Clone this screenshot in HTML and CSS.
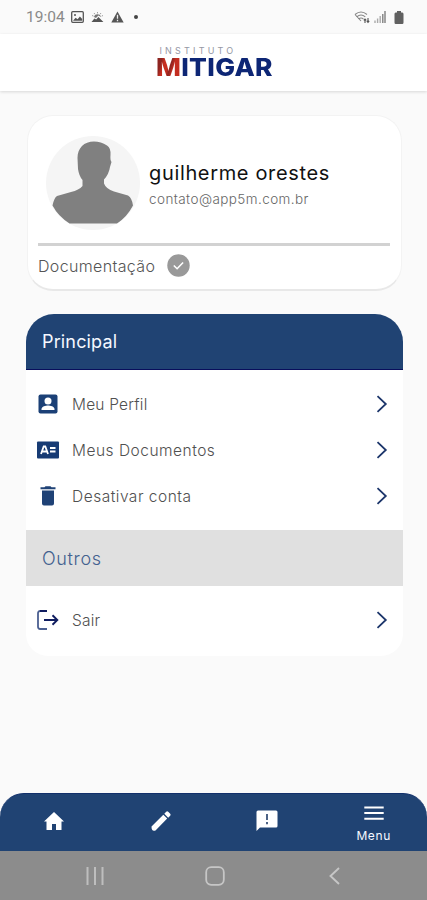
FILE: index.html
```html
<!DOCTYPE html>
<html lang="pt-BR">
<head>
<meta charset="utf-8">
<meta name="viewport" content="width=device-width">
<title>Instituto Mitigar</title>
<link rel="stylesheet" href="styles.css">
</head>
<body>
<div class="app">
  <div class="status">
    <div class="status-left">
      <span class="clock">19:04</span>
      <svg width="13" height="12" viewBox="0 0 13 12"><rect x=".7" y=".7" width="11.6" height="10.6" rx="1" fill="none" stroke="#555" stroke-width="1.3"/><path d="M2 9.8l2.6-3 2 1.4 2.3-2.8L11.2 8v1.8z" fill="#555"/><circle cx="4" cy="3.9" r="1" fill="#555"/></svg>
      <svg width="13" height="12" viewBox="0 0 13 12"><path d="M.5 11L3.4 7.5l1.8 1L7.4 6l5 5z" fill="#555"/><path d="M3 6a3.6 3.6 0 0 1 7 0L7.4 4.4 5 7z" fill="#777"/><path d="M1 4.5l1.5.6M3 2l1 1.3M6.5 1v1.4M10 2L9 3.3M12 4.5l-1.3.6" stroke="#888" stroke-width=".8"/></svg>
      <svg width="13" height="12" viewBox="0 0 13 12"><path d="M6.5.5L12.7 11.5H.3z" fill="#555"/><path d="M6.5 3.8v4M6.5 8.8v1.4" stroke="#eee" stroke-width="1.3"/></svg>
      <i class="dot"></i>
    </div>
    <div class="status-right">
      <svg width="16" height="13" viewBox="0 0 16 13" fill="none" stroke="#888" stroke-width="1.1"><path d="M1 3.500q6-5 12 0M2.700 5.800q4.300-3.700 8.600 0M4.600 8q2.400-2 4.800 0M1 3.500L7 10"/><path d="M11 12V8.200M9.800 9.400L11 8l1.200 1.400M14 7v4M12.800 9.800L14 11.300l1.200-1.500" stroke="#555"/></svg>
      <svg width="12" height="12" viewBox="0 0 12 12"><path d="M1 9.500V12M3.600 7.500V12M6.200 5V12" stroke="#aaa" stroke-width="1.400"/><path d="M8.800 3V12M11 0V12" stroke="#777" stroke-width="1.300"/></svg>
      <svg class="battery" width="10" height="13" viewBox="0 0 10 13"><path d="M3 0h4v1.500h1.300Q9.500 1.500 9.500 3v8.500Q9.500 13 8.300 13H1.700Q.5 13 .5 11.500V3Q.5 1.500 1.700 1.500H3z" fill="#606060"/></svg>
    </div>
  </div>

  <header class="brand">
    <div class="brand-top">INSTITUTO</div>
    <div class="brand-name"><span class="brand-m">M</span>ITIGAR</div>
  </header>

  <main class="content">
    <section class="profile">
      <div class="person">
        <svg class="avatar" width="94" height="94" viewBox="0 0 94 94"><circle cx="47" cy="47" r="47" fill="#f5f5f5"/><path d="M48 5.500C38 5.500 31.500 12 31.500 22L32 33Q33 40 36.500 44V50Q33 54 25 56L11 60Q8 62 6.500 69.500Q12 80 23.500 87.500H71Q81 81 87 69.500Q86 62 82 59.500L68 55.500Q60 53 58 47.500V43.500Q63 38 64 31L65.500 26Q64 24 64.500 19Q65 12 61 9.500Q55 5.500 48 5.500Z" fill="#808080"/></svg>
        <div class="who">
          <div class="name">guilherme orestes</div>
          <div class="mail">contato@app5m.com.br</div>
        </div>
      </div>
      <div class="rule"></div>
      <div class="docs"><span class="docs-label">Documentação</span>
        <svg width="23" height="23" viewBox="0 0 23 23"><circle cx="11.500" cy="11.500" r="11.200" fill="#999"/><path d="M6.800 11.500l3.300 3.200 6-6.200" fill="none" stroke="#fff" stroke-width="1.600"/></svg>
      </div>
    </section>

    <section class="menu">
      <h2 class="head head-main"><span>Principal</span></h2>
      <div class="rows">
        <div class="row">
          <svg class="icon" width="24" height="24" viewBox="0 0 24 24"><rect x="2.500" y="2.500" width="19" height="19" rx="2" fill="#1b4076"/><circle cx="12" cy="9" r="3.500" fill="#fff"/><path d="M5.500 18v-1c0-2.400 4.300-3.500 6.500-3.500s6.500 1.100 6.500 3.500v1z" fill="#fff"/></svg>
          <span class="label l-perfil">Meu Perfil</span>
          <svg class="chev" width="12" height="18" viewBox="0 0 12 18"><path d="M1.500 1.200L9.800 9l-8.300 7.800"/></svg>
        </div>
        <div class="row">
          <svg class="icon" width="24" height="24" viewBox="0 0 24 24"><rect x="1" y="3.500" width="22" height="17" rx="1" fill="#173b74"/><path d="M5 16l2.700-7.500h1.600L12 16M6 13.500h5M14 10h5.500M14 13.500h5.500" fill="none" stroke="#fff" stroke-width="1.800"/></svg>
          <span class="label l-docs">Meus Documentos</span>
          <svg class="chev" width="12" height="18" viewBox="0 0 12 18"><path d="M1.500 1.200L9.800 9l-8.300 7.800"/></svg>
        </div>
        <div class="row">
          <svg class="icon" width="24" height="24" viewBox="0 0 24 24"><path d="M6 6.500h12v13q0 2-2 2H8q-2 0-2-2zM4.500 3.300h4l1-1h5l1 1h4v1.900h-15z" fill="#1f4276"/></svg>
          <span class="label l-conta">Desativar conta</span>
          <svg class="chev" width="12" height="18" viewBox="0 0 12 18"><path d="M1.500 1.200L9.800 9l-8.300 7.800"/></svg>
        </div>
      </div>
      <h2 class="head head-other"><span>Outros</span></h2>
      <div class="rows">
        <div class="row">
          <svg class="icon" width="24" height="24" viewBox="0 0 24 24" fill="none"><path d="M11 3H4.200Q2 3 2 5.200V18.800Q2 21 4.200 21H11" stroke="#4b5f91" stroke-width="1.800"/><path d="M4 3h7M8 12h13M16.500 7.300l4.800 4.700-4.800 4.700" stroke="#101d60" stroke-width="1.900"/></svg>
          <span class="label l-sair">Sair</span>
          <svg class="chev" width="12" height="18" viewBox="0 0 12 18"><path d="M1.500 1.200L9.800 9l-8.300 7.800"/></svg>
        </div>
      </div>
    </section>
  </main>

  <nav class="tabs">
    <div class="tab"><svg width="24" height="24" viewBox="0 0 24 24" fill="#fff"><path d="M10 21v-6h4v6h5.500v-8.500H22L12 3 2 12.500h2.500V21z"/></svg></div>
    <div class="tab"><svg width="24" height="24" viewBox="0 0 24 24" fill="#fff"><path d="M2.500 17.500L14.300 5.700l3.900 3.900L6.500 21.500q-4 1.500-4-4zM15.300 4.700l1.900-1.900q1-.9 2 0l2 2q.9 1 0 2l-2 1.900z"/></svg></div>
    <div class="tab"><svg width="24" height="24" viewBox="0 0 24 24"><path d="M3 1.500h18q1.500 0 1.500 1.500v14q0 1.500-1.500 1.500H5L1.500 22V3Q1.500 1.500 3 1.500z" fill="#fff"/><path d="M12 5v6M12 13v2.200" stroke="#4c6285" stroke-width="2"/></svg></div>
    <div class="tab tab-on">
      <svg width="20" height="14" viewBox="0 0 20 14"><path d="M.3 1.500h19.400M.3 7.100h19.400M.3 12.700h19.400" stroke="#fff" stroke-width="2"/></svg>
      <span class="tab-label">Menu</span>
    </div>
  </nav>
  <div class="system">
    <svg width="18" height="18" viewBox="0 0 18 18" stroke="#bebebe" stroke-width="2"><path d="M1.500 0v18M9 0v18M16.500 0v18"/></svg>
    <svg width="20" height="20" viewBox="0 0 20 20"><rect x="1.200" y="1.200" width="17.600" height="17.600" rx="5" fill="none" stroke="#c6c6c6" stroke-width="1.800"/></svg>
    <svg width="18" height="18" viewBox="0 0 18 18"><path d="M13 1L4.500 9l8.500 8" fill="none" stroke="#c6c6c6" stroke-width="1.900"/></svg>
  </div>
</div>
</body>
</html>
```
FILE: styles.css
```css
* { box-sizing: border-box; }
body { margin: 0; background: #fafafa; font-family: Inter, "Open Sans", sans-serif; }
svg { display: block; flex: none; }
.app { width: 427px; height: 900px; display: flex; flex-direction: column; overflow: hidden; background: #fafafa; }

.status { height: 34px; flex: none; display: flex; justify-content: space-between; padding: 0 23px 0 26px; background: #fafafa; }
.status-left, .status-right { display: flex; align-items: center; }
.status-left { gap: 7px; }
.clock { font: 400 15.500px/34px Roboto, sans-serif; color: #8a8a8a; width: 38px; white-space: nowrap; }
.dot { width: 4px; height: 4px; border-radius: 50%; background: #444; margin-left: 3px; }
.status-right { gap: 4px; }
.battery { margin-left: 4px; }

.brand { height: 57px; flex: none; padding-top: 11px; background: #fff; box-shadow: 0 1px 3px rgba(0,0,0,.14); display: flex; flex-direction: column; align-items: center; white-space: nowrap; }
.brand-top { width: 112px; padding-left: 2px; font-size: 9px; line-height: 11px; letter-spacing: 3.200px; color: #9597a4; }
.brand-name { width: 115px; font-size: 24px; line-height: 24px; font-weight: 800; letter-spacing: .3px; color: #0d2675; transform: scaleX(1.1); transform-origin: left; }
.brand-m { color: transparent; background: linear-gradient(105deg, #8d2420 0 22%, #c62e20 32% 46%, #8d2420 54%, #c32d20 64%); -webkit-background-clip: text; background-clip: text; }

.content { flex: 1; padding: 24px 24px 0 26px; }
.profile { width: 375px; height: 176px; margin-left: 1px; padding: 20px 11px 0 10px; border-radius: 26px; border: 1px solid #f3f3f3; border-bottom: 2px solid #e8e8e8; background: #fff; }
.person { display: flex; align-items: center; height: 94px; padding-left: 8px; gap: 9px; }
.avatar { margin-top: -1px; }
.who { padding-top: 4px; white-space: nowrap; }
.name { font-size: 20px; line-height: 28px; font-weight: 400; color: #111; letter-spacing: .65px; }
.mail { font-size: 13.500px; line-height: 24px; font-weight: 300; color: #666; letter-spacing: .42px; }
.rule { height: 3px; margin-top: 13px; background: #d2d2d2; }
.docs { display: flex; align-items: center; gap: 11px; margin-top: 8px; }
.docs-label { width: 118px; font-size: 16px; font-weight: 300; color: #555; letter-spacing: .35px; white-space: nowrap; }

.menu { width: 377px; margin-top: 23px; height: 342px; border-radius: 28px 28px 22px 22px; overflow: hidden; background: #fff; }
.head { margin: 0; height: 56px; padding-left: 16px; display: flex; align-items: center; font-size: 18px; font-weight: 400; }
.head-main { background: #204373; color: #f5f8ff; border-bottom: 1px solid #090e5c; letter-spacing: .15px; }
.head-other { background: #e0e0e0; color: #43618f; font-weight: 300; letter-spacing: .65px; }
.rows { padding: 11px 15px 11px 10px; }
.row { height: 46px; display: flex; align-items: center; }
.label { flex: 1; margin-left: 12px; font-size: 15.500px; font-weight: 300; color: #505050; letter-spacing: .5px; }
.l-perfil { letter-spacing: .2px; }
.l-sair { letter-spacing: .2px; }
.chev path { fill: none; stroke: #1d366b; stroke-width: 1.800; }

.tabs { height: 58px; flex: none; display: grid; grid-template-columns: repeat(4, 1fr); background: #204373; border-radius: 24px 24px 0 0; border-top: 1px solid #12306b; }
.tab { display: flex; flex-direction: column; align-items: center; justify-content: center; padding: 0 0 3px 1px; }
.tab-on { gap: 9px; padding: 3px 0 0; }
.tab-label { font-size: 12px; line-height: 14px; color: #f5f8ff; letter-spacing: .6px; }
.system { height: 49px; flex: none; display: grid; grid-template-columns: 120px 120px 120px; padding: 0 31px 0 35px; align-items: center; justify-items: center; background: #8c8c8c; }
```
